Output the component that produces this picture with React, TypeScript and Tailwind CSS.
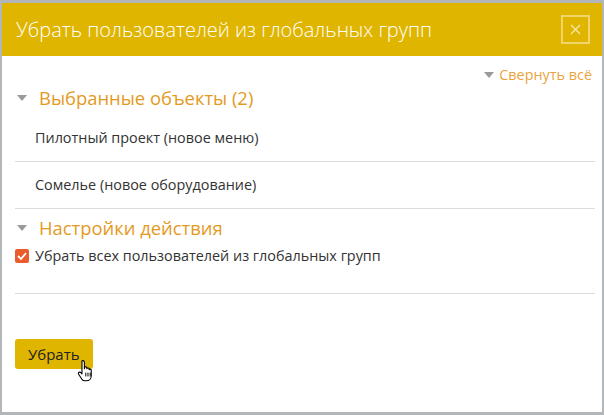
import React from "react";

function Caret() {
  return (
    <svg width="10" height="6" viewBox="0 0 10 6" className="shrink-0">
      <path d="M0 0 L10 0 L5 6 Z" fill="#9a9a9a" />
    </svg>
  );
}

function HandCursor() {
  return (
    <svg width="22" height="24" viewBox="0 0 20 22">
      <path
        d="M6 1.5c1 0 1.6.7 1.6 1.6V9l.2-1.2c.2-.8 1.8-.9 2 .1l.1 1c.2-.9 1.8-1 2 0l.1.9c.3-.8 1.8-.7 1.9.3v5.2c0 2.5-1.8 4.7-4.6 4.7H8.2c-1.4 0-2.3-.6-3-1.6L2.3 14c-.6-.9 0-2 1-2 .5 0 1 .3 1.3.7l.8 1V3.1C5.4 2.2 5.1 1.5 6 1.5z"
        fill="#fff"
        stroke="#000"
        strokeWidth="1"
        strokeLinejoin="round"
      />
      <path d="M8.9 12.5v3.5M10.9 12.5v3.5M12.9 12.5v3.5" stroke="#000" strokeWidth="0.9" />
    </svg>
  );
}

export default function App() {
  return (
    <div
      className="h-[415px] w-[604px] overflow-hidden bg-[#b3b6b9] pb-[3px] pl-[2px] pr-[2px] pt-[3px]"
      style={{ fontFamily: '"Open Sans", "Noto Sans", sans-serif' }}
    >
      <div className="flex h-full flex-col bg-white">
        {/* заголовок */}
        <header className="flex h-[53px] shrink-0 items-center justify-between bg-[#dfb500] pl-[14px] pr-[12px]">
          <h1 className="text-[20px] font-light leading-none text-white">
            Убрать пользователей из глобальных групп
          </h1>
          <button className="flex h-[29px] w-[29px] items-center justify-center border-2 border-[#efd56a] bg-[#dfb500]">
            <svg width="11" height="11" viewBox="0 0 11 11">
              <path d="M1 1 L10 10 M10 1 L1 10" stroke="#f7e9b0" strokeWidth="1.2" />
            </svg>
          </button>
        </header>

        <main className="flex flex-1 flex-col pl-[13px] pr-[7px]">
          <div className="flex justify-end pr-[3px] pt-[9px]">
            <a className="flex items-center gap-[5px] text-[14.4px] leading-[20px] text-[#e9a440]">
              <Caret />
              Свернуть всё
            </a>
          </div>

          <div className="flex items-center gap-[12px] pl-[2px]">
            <Caret />
            <span className="text-[18.4px] leading-[26px] text-[#e49a1e]">
              Выбранные объекты (2)
            </span>
          </div>
          <ul className="mt-[4px] text-[14.4px] text-[#333]">
            <li className="border-b border-[#dcdcdc] py-[13px] pl-[20px] leading-[20px]">
              Пилотный проект (новое меню)
            </li>
            <li className="border-b border-[#dcdcdc] py-[13px] pl-[20px] leading-[20px]">
              Сомелье (новое оборудование)
            </li>
          </ul>

          <div className="mt-[6px] flex items-center gap-[12px] pl-[2px]">
            <Caret />
            <span className="text-[18.4px] leading-[26px] text-[#e49a1e]">
              Настройки действия
            </span>
          </div>
          <label className="mt-[5px] flex items-center gap-[6px] border-b border-[#dcdcdc] pb-[27px] text-[14.4px] leading-[20px] text-[#333]">
            <span className="flex h-[14px] w-[14px] shrink-0 items-center justify-center rounded-[2px] bg-[#e95d2c]">
              <svg width="10" height="8" viewBox="0 0 10 8">
                <path d="M1 4 L4 7 L9 1" fill="none" stroke="#fff" strokeWidth="1.8" />
              </svg>
            </span>
            Убрать всех пользователей из глобальных групп
          </label>

          <div className="relative mt-[45px] w-fit">
            <button className="h-[30px] rounded-[3px] bg-[#dfb500] px-[13px] text-[15px] text-[#222]">
              Убрать
            </button>
            <span className="absolute left-[61px] top-[20px]">
              <HandCursor />
            </span>
          </div>
        </main>
      </div>
    </div>
  );
}
